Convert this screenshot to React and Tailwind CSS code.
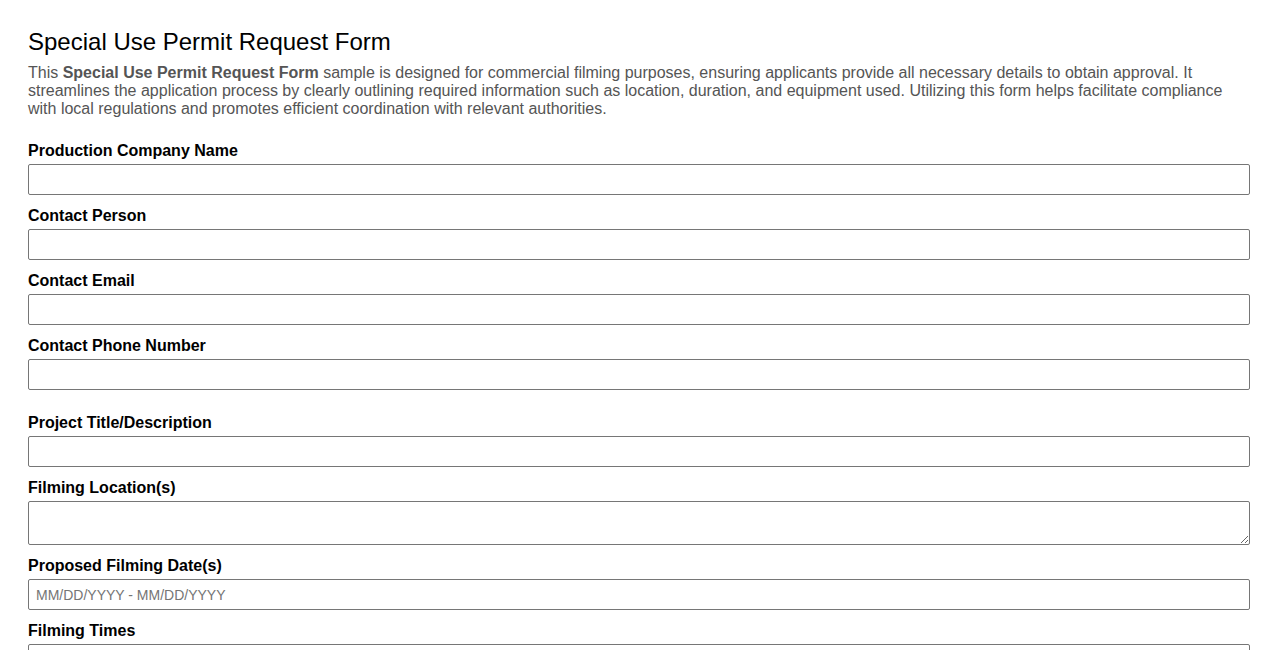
export default function App() {
  const field = (label, el) => (
    <div className="flex flex-col">
      <label className="pt-[1px] text-[16px] leading-[18px] font-bold text-black mb-[4px]">{label}</label>
      {el}
    </div>
  );
  const input = (ph) => (
    <input
      type="text"
      placeholder={ph}
      className="h-[31px] w-full border border-[#767676] rounded-[2px] px-[7px] text-[14px] placeholder:text-[#757575] outline-none"
    />
  );
  return (
    <div className="min-h-screen bg-white px-[28px] pt-[28px] pb-8" style={{ fontFamily: '"Liberation Sans", Arial, sans-serif' }}>
      <h1 className="text-[24px] leading-[28px] text-black">Special Use Permit Request Form</h1>
      <p className="mt-[8px] text-[16px] leading-[18px] text-[#555555]">
        This <b>Special Use Permit Request Form</b> sample is designed for commercial filming purposes, ensuring applicants provide all necessary details to obtain approval. It streamlines the application process by clearly outlining required information such as location, duration, and equipment used. Utilizing this form helps facilitate compliance with local regulations and promotes efficient coordination with relevant authorities.
      </p>
      <div className="mt-[23px] flex flex-col gap-[11px]">
        {field("Production Company Name", input())}
        {field("Contact Person", input())}
        {field("Contact Email", input())}
        {field("Contact Phone Number", input())}
      </div>
      <div className="mt-[23px] flex flex-col gap-[11px]">
        {field("Project Title/Description", input())}
        {field(
          "Filming Location(s)",
          <textarea className="h-[44px] w-full border border-[#767676] rounded-[2px] px-[7px] block outline-none" />
        )}
        {field("Proposed Filming Date(s)", input("MM/DD/YYYY - MM/DD/YYYY"))}
        {field("Filming Times", input())}
      </div>
    </div>
  );
}
